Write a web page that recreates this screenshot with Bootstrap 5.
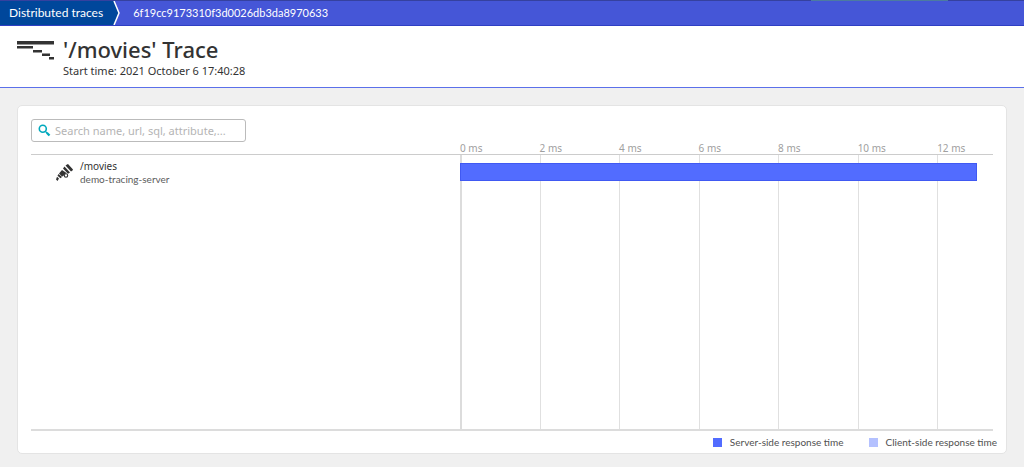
<!DOCTYPE html>
<html lang="en">
<head>
<meta charset="utf-8">
<meta name="viewport" content="width=device-width, initial-scale=1">
<title>'/movies' Trace</title>
<link href="https://cdn.jsdelivr.net/npm/bootstrap@5.3.0/dist/css/bootstrap.min.css" rel="stylesheet">
<style>
body{font-family:"Noto Sans","Open Sans",sans-serif;font-size:11px;line-height:14px;background:#f0f0f0;color:#333}
a{text-decoration:none}
.crumbs{height:26px;background:#4556d7;border-top:1px solid #35419f;border-bottom:1px solid #2f3fc4;line-height:24px;font-family:Lato,sans-serif}
.crumbs a,.crumbs span{color:#fff}
.crumb-root{background:#00479b;padding-left:9px;padding-right:10px;height:24px;font-size:12px}
.crumb-arrow{display:block;width:8px;height:24px}
.crumb-id{padding-left:12px;font-size:11px}
.load-mark{top:-1px;left:79.2%;width:13.4%;height:1px;background:#4c7ba0}
.trace-head{background:#fff;border-bottom:1px solid #5b70ea;padding:10px 17px 8px;gap:9px}
.trace-head h1{font-size:22px;line-height:27px;font-weight:500}
.head-icon{margin-top:4px}
.trace-head p{font-size:11px;line-height:16px}
.trace-card{margin:17px 17px 13px;border:1px solid #e4e4e4;border-radius:5px;padding:13px 13px 4px}
.search-box{width:215px;height:23px;border:1px solid #bbb;border-radius:3px;padding:0 6px;gap:4px}
.search-box input{font-size:11px;line-height:18px;color:#333;min-width:0;outline:0}
.search-box input::placeholder{color:#b4b4b4;opacity:1}
.axis{height:13px;border-bottom:1px solid #ccc;font-size:10px;line-height:12px;color:#a0a0a0}
.name-col{flex:0 0 44.6%}
.tick{flex:0 0 14.92%;white-space:nowrap}
.chart{border-bottom:2px solid #dcdcdc}
.grid-line{flex:0 0 14.92%;border-left:1px solid #e0e0e0}
.grid-line:first-child{border-left:2px solid #dcdcdc}
.grid-line:last-child,.tick:last-child{flex:1 1 0;min-width:0}
.span-name{padding:5px 0 0 25px;gap:7px}
.span-name div{font-size:10px;line-height:13px}
.span-name .service{color:#5c5c5c;font-family:Lato,sans-serif}
.span-bar{top:8px;left:0;height:18px;background:#526cff;border:1px solid #4059f2}
.legend{font-family:Lato,sans-serif;font-size:10px;line-height:14px;color:#505050;gap:25px;padding-top:4px;margin-right:-4px}
.swatch{width:9px;height:9px;margin-right:8px}
.server-time{background:#526cff}
.client-time{background:#b4c1ff}
</style>
</head>
<body class="min-vh-100 d-flex flex-column">
<nav class="crumbs d-flex position-relative" aria-label="Breadcrumb">
  <a class="crumb-root" href="#">Distributed traces</a>
  <svg class="crumb-arrow" viewBox="0 0 8 24" aria-hidden="true"><path d="M0 0h1l5 12-5 12H0z" fill="#00479b"/><path d="M1 0l5 12-5 12" fill="none" stroke="#fff" stroke-width="1.5"/></svg>
  <span class="crumb-id">6f19cc9173310f3d0026db3da8970633</span>
  <div class="load-mark position-absolute"></div>
</nav>
<header class="trace-head d-flex align-items-start">
  <svg class="head-icon" width="37" height="20" viewBox="0 0 37 20" fill="#333" aria-hidden="true"><path d="M0 1h37v3.500H0zM0 6h16v2.500H0zM16 10h9v2.500h-9zM25 13.500h8v2.500h-8zM32 17h5v2.500h-5z"/></svg>
  <div><h1 class="mb-0">'/movies' Trace</h1><p class="mb-0">Start time: 2021 October 6 17:40:28</p></div>
</header>
<main class="trace-card bg-white flex-grow-1 d-flex flex-column">
  <label class="search-box d-flex align-items-center">
    <svg width="13" height="13" viewBox="0 0 13 13" fill="none" stroke="#00a9bd" aria-hidden="true"><circle cx="4.800" cy="4.800" r="3.500" stroke-width="1.600"/><path d="M7.500 7.500l1.500 1.500" stroke-width="1.300"/><path d="M8.800 8.800l2.700 2.700" stroke-width="2.300"/></svg>
    <input class="border-0 bg-transparent p-0 flex-grow-1" type="text" aria-label="Search spans" placeholder="Search name, url, sql, attribute,...">
  </label>
  <div class="axis d-flex">
    <div class="name-col"></div>
    <div class="d-flex flex-grow-1"><span class="tick">0 ms</span><span class="tick">2 ms</span><span class="tick">4 ms</span><span class="tick">6 ms</span><span class="tick">8 ms</span><span class="tick">10 ms</span><span class="tick">12 ms</span></div>
  </div>
  <div class="chart d-flex flex-grow-1">
    <div class="name-col">
      <div class="span-name d-flex">
        <svg class="mt-1" width="17" height="18" viewBox="0 0 17 18" fill="#333" aria-hidden="true"><path d="M11 .5l1-.5 5 5.500-.5 1-1.500 1-5.500-6zM8.500 2.500l5.500 6-2 1.300L7 4.500zM6 6l4.500 3-1 .8A2.300 2.300 0 007.500 12l-1.500.5-3-3zM2.500 10l3.500 3-1.500 1.200-3-2.500zM1 12.800l2 1.700-1.500 2.500L0 15.500z"/><circle cx="10" cy="11.500" r="1.700" fill="#fff" stroke="#333" stroke-width="1.100"/></svg>
        <div><div>/movies</div><div class="service">demo-tracing-server</div></div>
      </div>
    </div>
    <div class="d-flex flex-grow-1 position-relative">
      <i class="grid-line"></i><i class="grid-line"></i><i class="grid-line"></i><i class="grid-line"></i><i class="grid-line"></i><i class="grid-line"></i><i class="grid-line"></i>
      <div class="span-bar position-absolute" style="width:97%"></div>
    </div>
  </div>
  <div class="legend d-flex justify-content-end">
    <span class="d-flex align-items-center"><i class="swatch server-time"></i>Server-side response time</span>
    <span class="d-flex align-items-center"><i class="swatch client-time"></i>Client-side response time</span>
  </div>
</main>
<script src="https://cdn.jsdelivr.net/npm/bootstrap@5.3.0/dist/js/bootstrap.bundle.min.js"></script>
</body>
</html>
